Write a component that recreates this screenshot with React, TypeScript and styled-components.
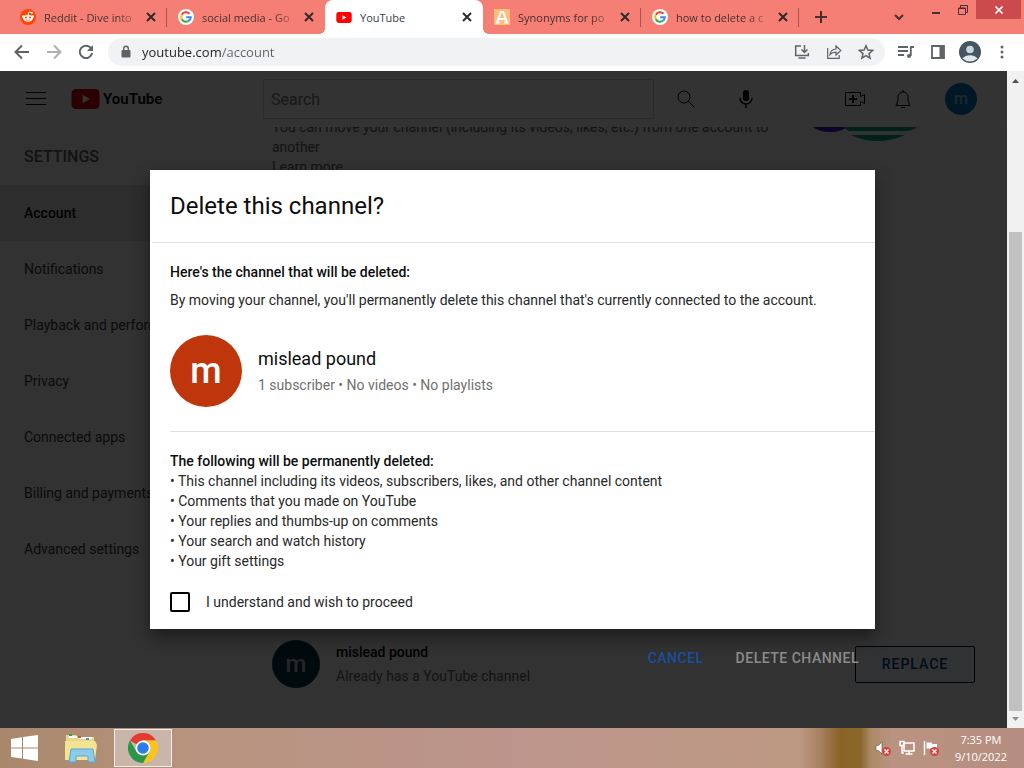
import React from "react";
import styled, { createGlobalStyle, css } from "styled-components";

const Global = createGlobalStyle`
  * { box-sizing: border-box; }
  body { margin: 0; font-family: Roboto, "Liberation Sans", sans-serif; font-size: 14px; }
  button, input { font: inherit; color: inherit; }
  button { background: none; border: 0; padding: 0; cursor: pointer; }
  h1, h2, h3, p, ul { margin: 0; padding: 0; }
  ul { list-style: none; }
  svg { display: block; flex: none; }
`;

const uiFont = `"Open Sans", "Noto Sans", sans-serif`;

const Desktop = styled.div`
  display: flex;
  flex-direction: column;
  min-height: 100vh;
  overflow: hidden;
`;

/* Browser tabs */
const TabStrip = styled.div`
  display: flex;
  height: 34px;
  padding-left: 9px;
  background: #f67f75;
  font-family: ${uiFont};
  font-size: 11px;
  color: #47302f;
`;
const Tab = styled.div<{ $active?: boolean; $divider?: boolean }>`
  position: relative;
  display: flex;
  align-items: center;
  flex: 0 1 158px;
  min-width: 0;
  padding: 0 9px 0 11px;
  ${(p) => p.$active && css`
    background: #fff;
    border-radius: 8px 8px 0 0;
    color: #3c4043;
    &::before, &::after {
      content: "";
      position: absolute;
      bottom: 0;
      width: 6px;
      height: 6px;
    }
    &::before {
      right: 100%;
      background: radial-gradient(circle at 0 0, transparent 6px, #fff 6px);
    }
    &::after {
      left: 100%;
      background: radial-gradient(circle at 100% 0, transparent 6px, #fff 6px);
    }
  `}
  ${(p) => p.$divider && css`
    &::after {
      content: "";
      position: absolute;
      right: 0;
      top: 8px;
      width: 1px;
      height: 19px;
      background: #a45550;
    }
  `}
`;
const TabTitle = styled.button<{ $fade?: boolean }>`
  flex: 1;
  min-width: 0;
  margin-left: 8px;
  white-space: nowrap;
  text-align: left;
  ${(p) => p.$fade && css`mask-image: linear-gradient(to right, #000 72px, transparent 98px);`}
`;
const TabClose = styled.button`
  display: grid;
  place-items: center;
  width: 14px;
  height: 16px;
  color: #2f2a2b;
`;
const NewTab = styled.button`
  display: grid;
  place-items: center;
  width: 44px;
`;
const WindowControls = styled.div`
  display: flex;
  align-items: flex-start;
  margin-left: auto;
  padding-right: 3px;
`;
const WinButton = styled.button<{ $kind?: "close" | "search" }>`
  display: grid;
  place-items: center;
  width: ${(p) => (p.$kind === "close" ? 45 : p.$kind === "search" ? 46 : 27)}px;
  height: ${(p) => (p.$kind === "search" ? 34 : 19)}px;
  background: ${(p) => (p.$kind === "close" ? "#cb4a4b" : "transparent")};
`;

/* Browser toolbar */
const Toolbar = styled.div`
  display: flex;
  align-items: center;
  height: 37px;
  padding: 0 6px 1px;
  background: #fff;
  color: #5f6368;
`;
const IconButton = styled.button<{ $faint?: boolean }>`
  display: grid;
  place-items: center;
  flex: none;
  width: 32px;
  height: 28px;
  opacity: ${(p) => (p.$faint ? 0.5 : 1)};
`;
const Address = styled.label`
  display: flex;
  align-items: center;
  flex: 1;
  height: 28px;
  margin: 0 5px 0 6px;
  padding: 0 3px 0 12px;
  border-radius: 14px;
  background: #f0f2f4;
`;
const AddressInput = styled.input`
  flex: 1;
  min-width: 0;
  margin-left: 10px;
  padding: 0;
  border: 0;
  outline: 0;
  font-family: ${uiFont};
  font-size: 13px;
  background: linear-gradient(to right, #202124 79px, #5f6368 79px) text;
  -webkit-text-fill-color: transparent;
`;

/* Page */
const Viewport = styled.div`
  display: flex;
  flex: 1;
`;
const Page = styled.div`
  position: relative;
  display: flex;
  flex-direction: column;
  flex: 1;
  min-width: 0;
  background: #f8f8f8;
`;
const Masthead = styled.header`
  position: relative;
  z-index: 1;
  display: flex;
  align-items: center;
  height: 56px;
  padding: 0 30px 0 26px;
  background: #fff;
`;
const Logo = styled.a`
  display: flex;
  align-items: center;
  gap: 3px;
  width: 192px;
  margin-left: 25px;
  color: #101010;
  font-size: 15px;
  font-weight: 700;
  text-decoration: none;
`;
const Search = styled.form`
  display: flex;
  flex: 1;
  margin-right: 4px;
`;
const SearchInput = styled.input`
  flex: 1;
  min-width: 0;
  height: 40px;
  padding: 0 7px;
  border: 1px solid #d8d8d8;
  background: #fff;
  font-size: 16px;
  &::placeholder { color: #777; opacity: 1; }
`;
const SearchButton = styled.button`
  display: grid;
  place-items: center;
  width: 64px;
`;
const MastheadButton = styled.button`
  display: grid;
  place-items: center;
  width: 48px;
  height: 40px;
`;
const MastheadTools = styled.div`
  display: flex;
  align-items: center;
  margin-left: 61px;
  margin-right: 18px;
`;
const Avatar = styled.span<{ $size: number; $color: string; $ink?: string }>`
  display: grid;
  place-items: center;
  flex: none;
  width: ${(p) => p.$size}px;
  height: ${(p) => p.$size}px;
  border-radius: 50%;
  background: ${(p) => p.$color};
  color: ${(p) => p.$ink || "#fff"};
  font-size: ${(p) => p.$size / 2}px;
  font-weight: 500;
  line-height: 1;
`;
const Columns = styled.div`
  display: flex;
  flex: 1;
`;
const Sidebar = styled.nav`
  flex: 0 0 240px;
`;
const SidebarTitle = styled.h2`
  padding: 2px 24px 0;
  font-size: 16px;
  font-weight: 500;
  line-height: 56px;
  color: #606060;
`;
const SidebarLink = styled.a<{ $current?: boolean }>`
  display: block;
  padding: 0 24px;
  line-height: 56px;
  white-space: nowrap;
  color: #383838;
  text-decoration: none;
  ${(p) => p.$current && css`background: #e2e2e2; color: #030303; font-weight: 500;`}
`;
const Main = styled.main`
  display: flex;
  flex-direction: column;
  justify-content: space-between;
  flex: 1;
  min-width: 0;
  margin-top: -10px;
  padding: 0 32px 40px;
`;
const Intro = styled.div`
  display: flex;
  justify-content: space-between;
  padding-right: 58px;
  line-height: 20px;
  color: #606060;
`;
const IntroText = styled.p`
  width: 510px;
  a { color: inherit; text-decoration: none; }
`;
const Row = styled.div`
  display: flex;
  align-items: center;
  gap: 16px;
`;
const AccountText = styled.div`
  flex: 1;
  line-height: 24px;
  color: #606060;
  strong { display: block; font-weight: 500; color: #030303; }
`;
const ReplaceButton = styled.button`
  width: 120px;
  height: 37px;
  border: 1px solid #001020;
  border-radius: 2px;
  background: #f2f8fc;
  font-weight: 500;
  letter-spacing: 1px;
  color: #063c86;
`;

/* Dialog */
const Scrim = styled.div`
  position: absolute;
  inset: 0;
  z-index: 2;
  display: grid;
  place-items: center;
  padding-left: 18px;
  background: rgba(0, 0, 0, 0.8);
`;
const Dialog = styled.section`
  position: relative;
  width: 725px;
  max-width: 100%;
  background: #fff;
  color: #0d0d0d;
  line-height: 20px;
  box-shadow: 0 8px 16px rgba(0, 0, 0, 0.45);
`;
const DialogTitle = styled.h1`
  margin-left: 2px;
  padding-left: 18px;
  border-bottom: 1px solid #e0e0e0;
  font-size: 24px;
  font-weight: 400;
  line-height: 72px;
`;
const DialogBody = styled.div`
  padding: 19px 0 17px 20px;
`;
const Strong = styled.h2`
  font-size: 14px;
  font-weight: 500;
  line-height: 20px;
`;
const Copy = styled.p`
  margin-top: 8px;
  color: #282828;
`;
const Channel = styled(Row)`
  padding: 25px 0 24px;
  border-bottom: 1px solid #e0e0e0;
  margin-bottom: 19px;
`;
const ChannelName = styled.h3`
  font-size: 18px;
  font-weight: 400;
  line-height: 28px;
`;
const ChannelMeta = styled.p`
  line-height: 24px;
  color: #707070;
`;
const Losses = styled.ul`
  color: #282828;
`;
const Consent = styled.label`
  display: flex;
  align-items: center;
  gap: 16px;
  margin-top: 21px;
  color: #282828;
`;
const Checkbox = styled.input`
  appearance: none;
  width: 20px;
  height: 20px;
  margin: 0;
  border: 2px solid #000;
  border-radius: 2px;
`;
const DialogActions = styled.div`
  position: absolute;
  top: 100%;
  right: 16px;
  display: flex;
  gap: 32px;
  padding-top: 19px;
`;
const ActionButton = styled.button<{ $muted?: boolean }>`
  font-weight: 500;
  line-height: 20px;
  letter-spacing: 0.5px;
  color: ${(p) => (p.$muted ? "#8c8c8c" : "#194f9e")};
`;

/* Scrollbar */
const Scrollbar = styled.div`
  display: flex;
  flex-direction: column;
  align-items: center;
  justify-content: space-between;
  width: 17px;
  padding: 8px 0 7px;
  background: #f1f1f1;
`;
const ScrollTrack = styled.div`
  display: flex;
  flex-direction: column;
  justify-content: flex-end;
  flex: 1;
  padding: 6px 0;
`;
const ScrollThumb = styled.div`
  width: 13px;
  height: 77%;
  background: #c1c1c1;
`;

/* Taskbar */
const Taskbar = styled.footer`
  display: flex;
  align-items: center;
  height: 40px;
  background:
    linear-gradient(to right, transparent 78%, #9a704a88 80%, #8a6328 82%, #8a6628 84%, #a0805099 85%, transparent 87%),
    linear-gradient(to right, #a8876b, #b99480 20%, #bc948b 50%, #bd9882 78%, #b58d80);
  color: #fff;
  font-family: ${uiFont};
  font-size: 11px;
`;
const TaskButton = styled.button<{ $width: number; $active?: boolean }>`
  display: grid;
  place-items: center;
  width: ${(p) => p.$width}px;
  height: 38px;
  ${(p) => p.$active && css`background: #c9b5aa; border: 1px solid #f5ece6;`}
`;
const Tray = styled.div`
  display: flex;
  align-items: center;
  gap: 8px;
  margin-left: auto;
  padding-right: 17px;
`;
const Clock = styled.time`
  margin-left: 8px;
  text-align: center;
  line-height: 17px;
`;

const Cross = ({ size = 10, width = 2 }: { size?: number; width?: number }) => (
  <svg width={size} height={size} viewBox="0 0 10 10" stroke="currentColor" strokeWidth={width}>
    <path d="M1 1l8 8M9 1L1 9" />
  </svg>
);
const RedditIcon = () => (
  <svg width="16" height="16" viewBox="0 0 16 16">
    <circle cx="8" cy="8" r="8" fill="#ff4500" />
    <path d="M8 6l1-3 2.500.6" stroke="#fff" fill="none" />
    <circle cx="11.800" cy="3.700" r="1" fill="#fff" />
    <circle cx="3.500" cy="7.700" r="1.400" fill="#fff" />
    <circle cx="12.500" cy="7.700" r="1.400" fill="#fff" />
    <ellipse cx="8" cy="9.300" rx="4.900" ry="3.500" fill="#fff" />
    <circle cx="6" cy="8.600" r="1" fill="#ff4500" />
    <circle cx="10" cy="8.600" r="1" fill="#ff4500" />
    <path d="M6 10.800q2 1.200 4 0" stroke="#ff4500" fill="none" strokeWidth=".8" />
  </svg>
);
const GoogleIcon = () => (
  <svg width="16" height="16" viewBox="0 0 16 16" fill="none" strokeWidth="2">
    <circle cx="8" cy="8" r="8" fill="#fff" />
    <path d="M11.500 4.700A4.800 4.800 0 0 0 3.800 5.700" stroke="#ea4335" />
    <path d="M3.800 5.700a4.800 4.800 0 0 0 0 4.600" stroke="#fbbc05" />
    <path d="M3.800 10.300a4.800 4.800 0 0 0 7.300 1.300" stroke="#34a853" />
    <path d="M11.100 11.600A4.800 4.800 0 0 0 12.800 8.200H8.200" stroke="#4285f4" />
  </svg>
);
const YouTubeIcon = ({ width, height, color = "#f00" }: { width: number; height: number; color?: string }) => (
  <svg width={width} height={height} viewBox="0 0 28 20">
    <rect width="28" height="20" rx="4.500" fill={color} />
    <path d="M11.200 5.700v8.600l7.300-4.300z" fill="#fff" />
  </svg>
);
const LetterIcon = () => (
  <svg width="16" height="16" viewBox="0 0 16 16">
    <rect width="16" height="16" fill="#fdbd7b" />
    <path d="M3 13.500L6.800 3h2.400L13 13.500M5 10h6M1.800 13.500h4M10.200 13.500h4" stroke="#fff" strokeWidth="2" fill="none" />
  </svg>
);

const tabs = [
  { title: "Reddit - Dive into", icon: <RedditIcon />, divider: true },
  { title: "social media - Go", icon: <GoogleIcon /> },
  { title: "YouTube", icon: <YouTubeIcon width={16} height={11} />, active: true },
  { title: "Synonyms for po", icon: <LetterIcon />, divider: true },
  { title: "how to delete a c", icon: <GoogleIcon />, divider: true },
];
const links = ["Account", "Notifications", "Playback and performance", "Privacy", "Connected apps", "Billing and payments", "Advanced settings"];
const losses = [
  "This channel including its videos, subscribers, likes, and other channel content",
  "Comments that you made on YouTube",
  "Your replies and thumbs-up on comments",
  "Your search and watch history",
  "Your gift settings",
];

const Stroke = ({ d, size = 16, width = 1, box = 16 }: { d: string; size?: number; width?: number; box?: number }) => (
  <svg width={size} height={size} viewBox={`0 0 ${box} ${box}`} fill="none" stroke="currentColor" strokeWidth={width}>
    <path d={d} />
  </svg>
);

const TrayError = () => (
  <>
    <circle cx="11.500" cy="11.500" r="4.500" fill="#d8403a" />
    <path d="M9.500 9.500l4 4M13.500 9.500l-4 4" stroke="#fff" strokeWidth="1.500" />
  </>
);

export default function App() {
  return (
    <Desktop>
      <Global />
      <TabStrip>
        {tabs.map((t) => (
          <Tab key={t.title} $active={t.active} $divider={t.divider}>
            {t.icon}
            <TabTitle $fade={!t.active}>{t.title}</TabTitle>
            <TabClose aria-label="Close tab"><Cross /></TabClose>
          </Tab>
        ))}
        <NewTab aria-label="New tab"><Stroke d="M6 0v12M0 6h12" size={12} box={12} width={2} /></NewTab>
        <WindowControls>
          <WinButton $kind="search" aria-label="Search tabs"><Stroke d="M1 3l4 4 4-4" size={10} box={10} width={2} /></WinButton>
          <WinButton aria-label="Minimize"><Stroke d="M1 8h8" size={10} box={10} width={2} /></WinButton>
          <WinButton aria-label="Restore"><Stroke d="M.5 3h7v6.500h-7zM2.500 3V.5h7v7h-2M.5 3.500h7" size={10} box={10} width={1} /></WinButton>
          <WinButton $kind="close" aria-label="Close"><svg width="8" height="8" viewBox="0 0 8 8" stroke="#fff" strokeWidth="1.600"><path d="M.5.5l7 7M7.500.5l-7 7" /></svg></WinButton>
        </WindowControls>
      </TabStrip>

      <Toolbar>
        <IconButton aria-label="Back"><Stroke d="M15 8H2M8 1.500L1.500 8 8 14.500" width={2} /></IconButton>
        <IconButton $faint aria-label="Forward"><Stroke d="M1 8h13M8 1.500L14.500 8 8 14.500" width={2} /></IconButton>
        <IconButton aria-label="Reload">
          <svg width="16" height="16" viewBox="0 0 16 16"><path d="M13 4.200A6.200 6.200 0 1 0 14.100 9" fill="none" stroke="currentColor" strokeWidth="2" /><path d="M15 1v6H9z" fill="currentColor" /></svg>
        </IconButton>
        <Address>
          <svg width="12" height="14" viewBox="0 0 12 14"><rect x="1.500" y="5" width="9" height="7.500" rx="1" fill="#5f6368" /><path d="M3.700 5V3.500a2.300 2.300 0 0 1 4.600 0V5" fill="none" stroke="#5f6368" strokeWidth="1.400" /></svg>
          <AddressInput aria-label="Address" defaultValue="youtube.com/account" />
          <IconButton aria-label="Install"><Stroke d="M7 2H1.700v9.500h12.600V9M4.500 14h7M10.500 1v7M7.500 5.500l3 3 3-3" width={1.5} /></IconButton>
          <IconButton aria-label="Share"><Stroke d="M1.700 4v10.300h11.500V11M4 10.500c.5-3.500 2.500-5.300 6-5.500V2l4.800 4.500L10 11V8.200c-2.500 0-4.500.6-6 2.300z" width={1.2} /></IconButton>
          <IconButton aria-label="Bookmark"><Stroke d="M8 1.800l1.900 4.300 4.700.4-3.600 3.100 1.100 4.600L8 11.700l-4.100 2.500L5 9.600 1.400 6.500l4.700-.4z" width={1.5} /></IconButton>
        </Address>
        <IconButton aria-label="Media">
          <svg width="18" height="16" viewBox="0 0 18 16" fill="none" stroke="currentColor" strokeWidth="1.800"><path d="M1 3h10M1 7h10M1 11h6M17 3h-3.200v9" /><circle cx="12" cy="12" r="2" fill="currentColor" stroke="none" /></svg>
        </IconButton>
        <IconButton aria-label="Side panel"><svg width="14" height="14" viewBox="0 0 14 14"><path d="M1 1h12v12H1z" fill="none" stroke="currentColor" strokeWidth="1.800" /><path d="M8.500 1H13v12H8.500z" fill="currentColor" /></svg></IconButton>
        <IconButton aria-label="Profile"><svg width="22" height="22" viewBox="0 0 22 22"><circle cx="11" cy="11" r="11" fill="#46545e" /><circle cx="11" cy="8.500" r="3.800" fill="#c5d6e2" /><path d="M3.500 17.500c3-4.500 12-4.500 15 0a11 11 0 0 1-15 0z" fill="#dfe8ee" /></svg></IconButton>
        <IconButton aria-label="Menu"><svg width="4" height="14" viewBox="0 0 4 14" fill="currentColor"><circle cx="2" cy="2" r="1.500" /><circle cx="2" cy="7" r="1.500" /><circle cx="2" cy="12" r="1.500" /></svg></IconButton>
      </Toolbar>

      <Viewport>
        <Page>
          <Masthead>
            <button aria-label="Guide"><Stroke d="M0 3.500h20M0 9.500h20M0 15.500h20" size={20} box={20} width={1} /></button>
            <Logo href="#" aria-label="YouTube"><YouTubeIcon width={29} height={20} color="#d0000c" />YouTube</Logo>
            <Search>
              <SearchInput aria-label="Search" placeholder="Search" />
              <SearchButton type="button" aria-label="Search"><Stroke d="M14 8a6 6 0 1 1-12 0 6 6 0 0 1 12 0zM12.300 12.300l6.200 6.200" size={20} box={20} /></SearchButton>
            </Search>
            <MastheadButton aria-label="Voice search"><svg width="20" height="20" viewBox="0 0 20 20"><rect x="7" y="1" width="6" height="11" rx="3" /><path d="M4 9a6 6 0 0 0 12 0M10 15v4" fill="none" stroke="#000" strokeWidth="1.500" /></svg></MastheadButton>
            <MastheadTools>
              <MastheadButton aria-label="Create">
                <svg width="20" height="20" viewBox="0 0 20 20" fill="none" stroke="currentColor"><path d="M.5 3.500h15v4l4-2v9l-4-2v4H.5z" /><path d="M8 6v8M4 10h8" strokeWidth="2" /></svg>
              </MastheadButton>
              <MastheadButton aria-label="Notifications"><Stroke d="M2.500 16.500h15M4 16V13l1-1V8a5 5 0 0 1 10 0v4l1 1v3M8 18.500h4M10 3V1" size={20} box={20} /></MastheadButton>
            </MastheadTools>
            <Avatar as="button" $size={32} $color="#0277bd" $ink="#9cc4de">m</Avatar>
          </Masthead>
          <Columns>
            <Sidebar>
              <SidebarTitle>SETTINGS</SidebarTitle>
              {links.map((l, i) => <SidebarLink key={l} href="#" $current={i === 0}>{l}</SidebarLink>)}
            </Sidebar>
            <Main>
              <Intro>
                <IntroText>
                  You can move your channel (including its videos, likes, etc.) from one account to another<br />
                  <a href="#">Learn more</a>
                </IntroText>
                <svg width="104" height="26" viewBox="0 0 104 26"><path d="M0 10h34q-6 5-17 5T0 10z" fill="#4a10c0" /><path d="M30 10h74q-4 4-14 4H36zM38 18h54q-28 12-54 0z" fill="#00a080" /></svg>
              </Intro>
              <Row>
                <Avatar $size={48} $color="#083440" $ink="#b0c0c8">m</Avatar>
                <AccountText><strong>mislead pound</strong>Already has a YouTube channel</AccountText>
                <ReplaceButton>REPLACE</ReplaceButton>
              </Row>
            </Main>
          </Columns>
          <Scrim>
            <Dialog role="dialog" aria-labelledby="dialog-title">
              <DialogTitle id="dialog-title">Delete this channel?</DialogTitle>
              <DialogBody>
                <Strong>Here's the channel that will be deleted:</Strong>
                <Copy>By moving your channel, you'll permanently delete this channel that's currently connected to the account.</Copy>
                <Channel>
                  <Avatar $size={72} $color="#bf360c">m</Avatar>
                  <div>
                    <ChannelName>mislead pound</ChannelName>
                    <ChannelMeta>1 subscriber • No videos • No playlists</ChannelMeta>
                  </div>
                </Channel>
                <Strong>The following will be permanently deleted:</Strong>
                <Losses>{losses.map((l) => <li key={l}>• {l}</li>)}</Losses>
                <Consent><Checkbox type="checkbox" />I understand and wish to proceed</Consent>
              </DialogBody>
              <DialogActions>
                <ActionButton>CANCEL</ActionButton>
                <ActionButton $muted disabled>DELETE CHANNEL</ActionButton>
              </DialogActions>
            </Dialog>
          </Scrim>
        </Page>
        <Scrollbar>
          <svg width="7" height="4" viewBox="0 0 7 4"><path d="M0 4L3.500 0 7 4z" fill="#505050" /></svg>
          <ScrollTrack><ScrollThumb /></ScrollTrack>
          <svg width="7" height="4" viewBox="0 0 7 4"><path d="M0 0h7L3.500 4z" fill="#909090" /></svg>
        </Scrollbar>
      </Viewport>

      <Taskbar>
        <TaskButton $width={48} aria-label="Start"><svg width="27" height="26" viewBox="0 0 27 26" fill="#fff"><path d="M0 4l11-1.700V12.500H0zM12 2.100L27 0v12.500H12zM0 13.500h11v10L0 22zM12 13.500h15V26l-15-2.200z" /></svg></TaskButton>
        <TaskButton $width={66} aria-label="File Explorer">
          <svg width="34" height="30" viewBox="0 0 34 30">
            <path d="M2 2h10l2 2h16v7H2z" fill="#e8d88c" /><path d="M5 4h8M15 5h13" stroke="#fff" strokeWidth="2" /><path d="M5 2h3" stroke="#3c9a4a" strokeWidth="2" /><path d="M14 4h3" stroke="#d05040" strokeWidth="2" /><path d="M22 6h3" stroke="#4a90c0" strokeWidth="2" />
            <path d="M1 8h30l2 4-2 15H1z" fill="#f4e393" /><path d="M5 29l2-13h22l2 13h-7v-6H12v6z" fill="#8ccbea" stroke="#5aa6d4" />
          </svg>
        </TaskButton>
        <TaskButton $width={58} $active aria-label="Chrome">
          <svg width="30" height="30" viewBox="0 0 30 30">
            <path d="M15 15L2 7.500A15 15 0 0 1 28 7.500H15z" fill="#e33b2e" /><path d="M15 15l6.500 3.800L15 30A15 15 0 0 0 28 7.500H15z" fill="#fcc31e" /><path d="M15 15l6.500 3.800L15 30A15 15 0 0 1 2 7.500l6.500 11.200z" fill="#2a9646" /><circle cx="15" cy="15" r="7.500" fill="#fff" /><circle cx="15" cy="15" r="5.800" fill="#2c7ce9" />
          </svg>
        </TaskButton>
        <Tray>
          <svg width="16" height="16" viewBox="0 0 16 16"><path d="M1 5.500h2.500L7 2v12l-3.500-3.500H1z" fill="#fff" stroke="#6b4a3c" strokeWidth=".6" /><TrayError /></svg>
          <svg width="16" height="16" viewBox="0 0 16 16" fill="none" stroke="#fff" strokeWidth="1.500"><path d="M5 3h10v8H5zM10 11v3M6.500 14h7" /><path d="M1 1.500h4v4H1zM3 5.500V13h2" /></svg>
          <svg width="16" height="16" viewBox="0 0 16 16"><path d="M1.500 1v14" stroke="#fff" strokeWidth="1.500" /><path d="M3.500 2.500h5l1 1.500h4.500v6H9L8 8.500H3.500z" fill="#fff" /><TrayError /></svg>
          <Clock>7:35 PM<br />9/10/2022</Clock>
        </Tray>
      </Taskbar>
    </Desktop>
  );
}
